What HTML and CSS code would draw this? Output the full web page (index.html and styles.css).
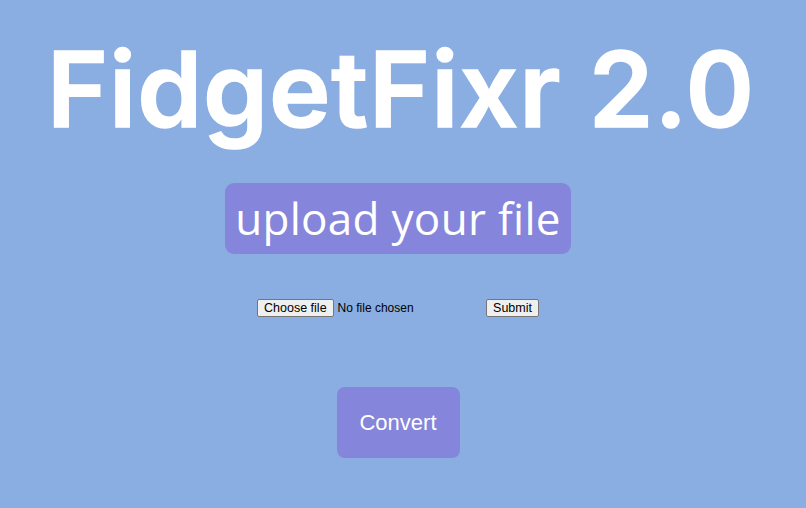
FILE: index.html
```html
<!DOCTYPE html>
<html lang="en">
<head>
<meta charset="utf-8">
<title>FidgetFixr 2.0</title>
<link rel="stylesheet" href="styles.css">
</head>
<body>
  <main class="page">
    <h1 class="title">FidgetFixr 2.0</h1>
    <div class="upload-heading">upload your file</div>
    <form class="upload-form">
      <label class="file-picker">
        <input class="file-input" type="file" name="file">
        <span class="btn">Choose file</span>
        <span class="file-name">No file chosen</span>
      </label>
      <input class="btn" type="submit" value="Submit">
    </form>
    <button class="convert" type="button">Convert</button>
  </main>
</body>
</html>
```

FILE: styles.css
```css
html, body {
  margin: 0;
  padding: 0;
  background: #8aaee1;
}

.page {
  display: flex;
  flex-direction: column;
  align-items: center;
  padding-right: 10px;
}

.title {
  margin: 25px 0 0 6px;
  font-family: "Inter", "Open Sans", sans-serif;
  font-weight: 600;
  font-size: 104px;
  line-height: 128px;
  color: #ffffff;
  letter-spacing: 0.9px;
  -webkit-text-stroke: 1.5px #ffffff;
}

.upload-heading {
  margin-top: 30px;
  padding: 0 10px;
  height: 71px;
  display: flex;
  align-items: center;
  background: #8585dc;
  border-radius: 9px;
  color: #ffffff;
  font-family: "Open Sans", "DejaVu Sans", sans-serif;
  font-size: 44px;
  letter-spacing: 0.3px;
  line-height: 71px;
}

.upload-form {
  margin-top: 45px;
  display: flex;
  align-items: center;
  font-family: "Liberation Sans", Arial, sans-serif;
  font-size: 12px;
}

.file-picker {
  width: 229px;
  display: flex;
  align-items: center;
  cursor: default;
}

.file-input {
  display: none;
}

.file-name {
  margin-left: 4px;
  color: #000000;
}

.btn {
  box-sizing: border-box;
  height: 18px;
  padding: 0 6px;
  display: inline-flex;
  align-items: center;
  background: #efefef;
  border: 1px solid #767676;
  border-radius: 2px;
  color: #000000;
  font-family: "Liberation Sans", Arial, sans-serif;
  font-size: 12.5px;
  line-height: 16px;
}

.convert {
  margin-top: 70px;
  width: 123px;
  height: 71px;
  border: none;
  border-radius: 8px;
  background: #8585dc;
  color: #ffffff;
  font-family: "Liberation Sans", Arial, sans-serif;
  font-size: 22px;
}
```
